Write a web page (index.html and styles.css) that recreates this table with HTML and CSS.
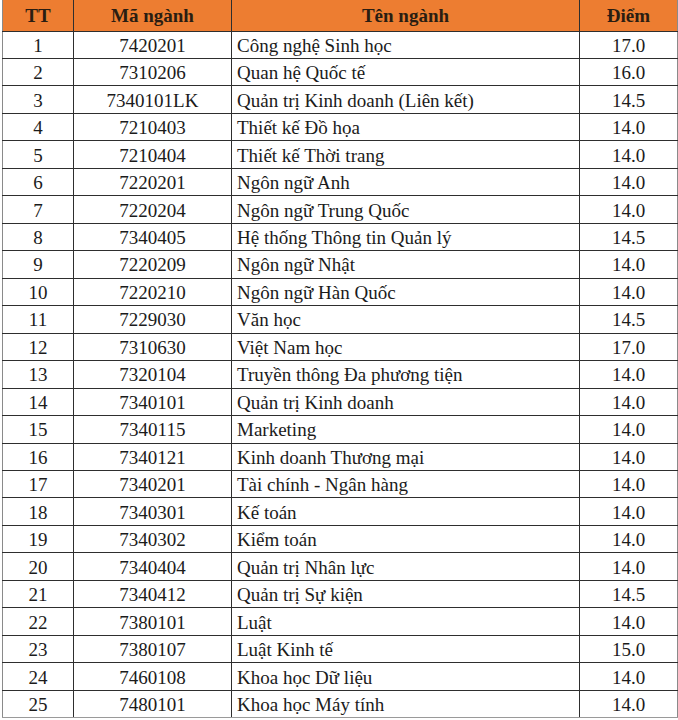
FILE: index.html
```html
<!DOCTYPE html>
<html lang="vi">
<head>
<meta charset="utf-8">
<title>Điểm chuẩn</title>
<link rel="stylesheet" href="styles.css">
</head>
<body>
<table class="scores">
  <colgroup>
    <col class="c-tt">
    <col class="c-code">
    <col class="c-name">
    <col class="c-score">
  </colgroup>
  <thead>
    <tr class="head">
      <th>TT</th>
      <th>Mã ngành</th>
      <th>Tên ngành</th>
      <th>Điểm</th>
    </tr>
  </thead>
  <tbody>
    <tr><td>1</td><td>7420201</td><td class="name">Công nghệ Sinh học</td><td>17.0</td></tr>
    <tr><td>2</td><td>7310206</td><td class="name">Quan hệ Quốc tế</td><td>16.0</td></tr>
    <tr><td>3</td><td>7340101LK</td><td class="name">Quản trị Kinh doanh (Liên kết)</td><td>14.5</td></tr>
    <tr><td>4</td><td>7210403</td><td class="name">Thiết kế Đồ họa</td><td>14.0</td></tr>
    <tr><td>5</td><td>7210404</td><td class="name">Thiết kế Thời trang</td><td>14.0</td></tr>
    <tr><td>6</td><td>7220201</td><td class="name">Ngôn ngữ Anh</td><td>14.0</td></tr>
    <tr><td>7</td><td>7220204</td><td class="name">Ngôn ngữ Trung Quốc</td><td>14.0</td></tr>
    <tr><td>8</td><td>7340405</td><td class="name">Hệ thống Thông tin Quản lý</td><td>14.5</td></tr>
    <tr><td>9</td><td>7220209</td><td class="name">Ngôn ngữ Nhật</td><td>14.0</td></tr>
    <tr><td>10</td><td>7220210</td><td class="name">Ngôn ngữ Hàn Quốc</td><td>14.0</td></tr>
    <tr><td>11</td><td>7229030</td><td class="name">Văn học</td><td>14.5</td></tr>
    <tr><td>12</td><td>7310630</td><td class="name">Việt Nam học</td><td>17.0</td></tr>
    <tr><td>13</td><td>7320104</td><td class="name">Truyền thông Đa phương tiện</td><td>14.0</td></tr>
    <tr><td>14</td><td>7340101</td><td class="name">Quản trị Kinh doanh</td><td>14.0</td></tr>
    <tr><td>15</td><td>7340115</td><td class="name">Marketing</td><td>14.0</td></tr>
    <tr><td>16</td><td>7340121</td><td class="name">Kinh doanh Thương mại</td><td>14.0</td></tr>
    <tr><td>17</td><td>7340201</td><td class="name">Tài chính - Ngân hàng</td><td>14.0</td></tr>
    <tr><td>18</td><td>7340301</td><td class="name">Kế toán</td><td>14.0</td></tr>
    <tr><td>19</td><td>7340302</td><td class="name">Kiểm toán</td><td>14.0</td></tr>
    <tr><td>20</td><td>7340404</td><td class="name">Quản trị Nhân lực</td><td>14.0</td></tr>
    <tr><td>21</td><td>7340412</td><td class="name">Quản trị Sự kiện</td><td>14.5</td></tr>
    <tr><td>22</td><td>7380101</td><td class="name">Luật</td><td>14.0</td></tr>
    <tr><td>23</td><td>7380107</td><td class="name">Luật Kinh tế</td><td>15.0</td></tr>
    <tr><td>24</td><td>7460108</td><td class="name">Khoa học Dữ liệu</td><td>14.0</td></tr>
    <tr><td>25</td><td>7480101</td><td class="name">Khoa học Máy tính</td><td>14.0</td></tr>
  </tbody>
</table>
</body>
</html>
```
FILE: styles.css
```css
html, body {
  margin: 0;
  padding: 0;
  background: #ffffff;
}

body {
  font-family: "Liberation Serif", "Times New Roman", Tinos, "DejaVu Serif", serif;
  color: #1b1b1b;
}

.scores {
  margin: 0 0 0 2px;
  width: 675px;
  table-layout: fixed;
  border-collapse: collapse;
  font-family: "Liberation Serif", "Times New Roman", Tinos, "DejaVu Serif", serif;
  font-size: 19px;
}

.c-tt { width: 71px; }
.c-code { width: 158px; }
.c-name { width: 348px; }
.c-score { width: 98px; }

.scores th,
.scores td {
  padding: 0;
  border: 1px solid #2e2e2e;
  text-align: center;
  vertical-align: middle;
  line-height: 22px;
  white-space: nowrap;
}

.scores .head {
  height: 31px;
  background: #ed7d31;
}

.scores th {
  border-top: none;
  font-weight: bold;
  color: #2a1d12;
  padding-top: 1px;
}

.scores tbody tr {
  height: 27.48px;
}

.scores td {
  padding-top: 2px;
}

.scores td.name {
  text-align: left;
  padding-left: 5px;
}

.scores tbody tr:last-child td {
  border-bottom-color: #9a9a9a;
}

.scores tr > :first-child {
  border-left-color: #8a8a8a;
}

.scores tr > :last-child {
  border-right-color: #8a8a8a;
}
```
